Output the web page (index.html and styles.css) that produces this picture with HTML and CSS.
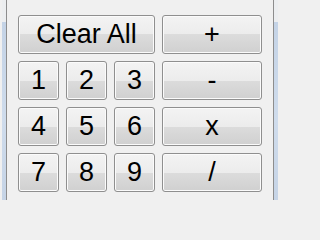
FILE: index.html
```html
<!DOCTYPE html>
<html>
<head>
<meta charset="utf-8">
<link rel="stylesheet" href="styles.css">
</head>
<body>
<div class="window">
  <div class="edge edge-left"></div>
  <div class="client">
    <div class="pad">
      <button class="btn wide">Clear All</button>
      <button class="btn">+</button>
      <button class="btn">1</button>
      <button class="btn">2</button>
      <button class="btn">3</button>
      <button class="btn">-</button>
      <button class="btn">4</button>
      <button class="btn">5</button>
      <button class="btn">6</button>
      <button class="btn">x</button>
      <button class="btn">7</button>
      <button class="btn">8</button>
      <button class="btn">9</button>
      <button class="btn">/</button>
    </div>
  </div>
  <div class="edge edge-right"></div>
</div>
</body>
</html>
```

FILE: styles.css
```css
html, body {
  margin: 0;
  padding: 0;
  background: #f0f0f0;
}
.window {
  display: flex;
  width: 280px;
  height: 200px;
  overflow: hidden;
  background: #f0f0f0;
}
.edge {
  width: 4px;
  flex: none;
  background: linear-gradient(#eceef0 22px, #c4d3e6 22px, #cfdcec 120px, #c6d4e6) content-box, #f0f0f0;
}
.edge-left {
  padding-left: 2px;
  border-right: 1px solid #8d8d8d;
}
.edge-right {
  padding-right: 2px;
  border-left: 1px solid #8d8d8d;
}
.client {
  flex: 1;
  padding: 15px 10px 0 11px;
}
.pad {
  display: grid;
  grid-template-columns: 41px 41px 41px 100px;
  grid-template-rows: repeat(4, 39px);
  column-gap: 7px;
  row-gap: 7px;
}
.wide {
  grid-column: 1 / span 3;
}
.btn {
  margin: 0;
  padding: 0;
  display: flex;
  align-items: center;
  justify-content: center;
  font-family: "Liberation Sans", Arial, sans-serif;
  font-size: 27px;
  color: #000;
  border: 1px solid #8f8f8f;
  border-radius: 3px;
  box-shadow: inset 0 0 0 1px #fbfbfb;
  background: linear-gradient(#f3f3f3 0%, #ececec 50%, #dcdcdc 50%, #d0d0d0 100%);
  line-height: 1;
}
```
